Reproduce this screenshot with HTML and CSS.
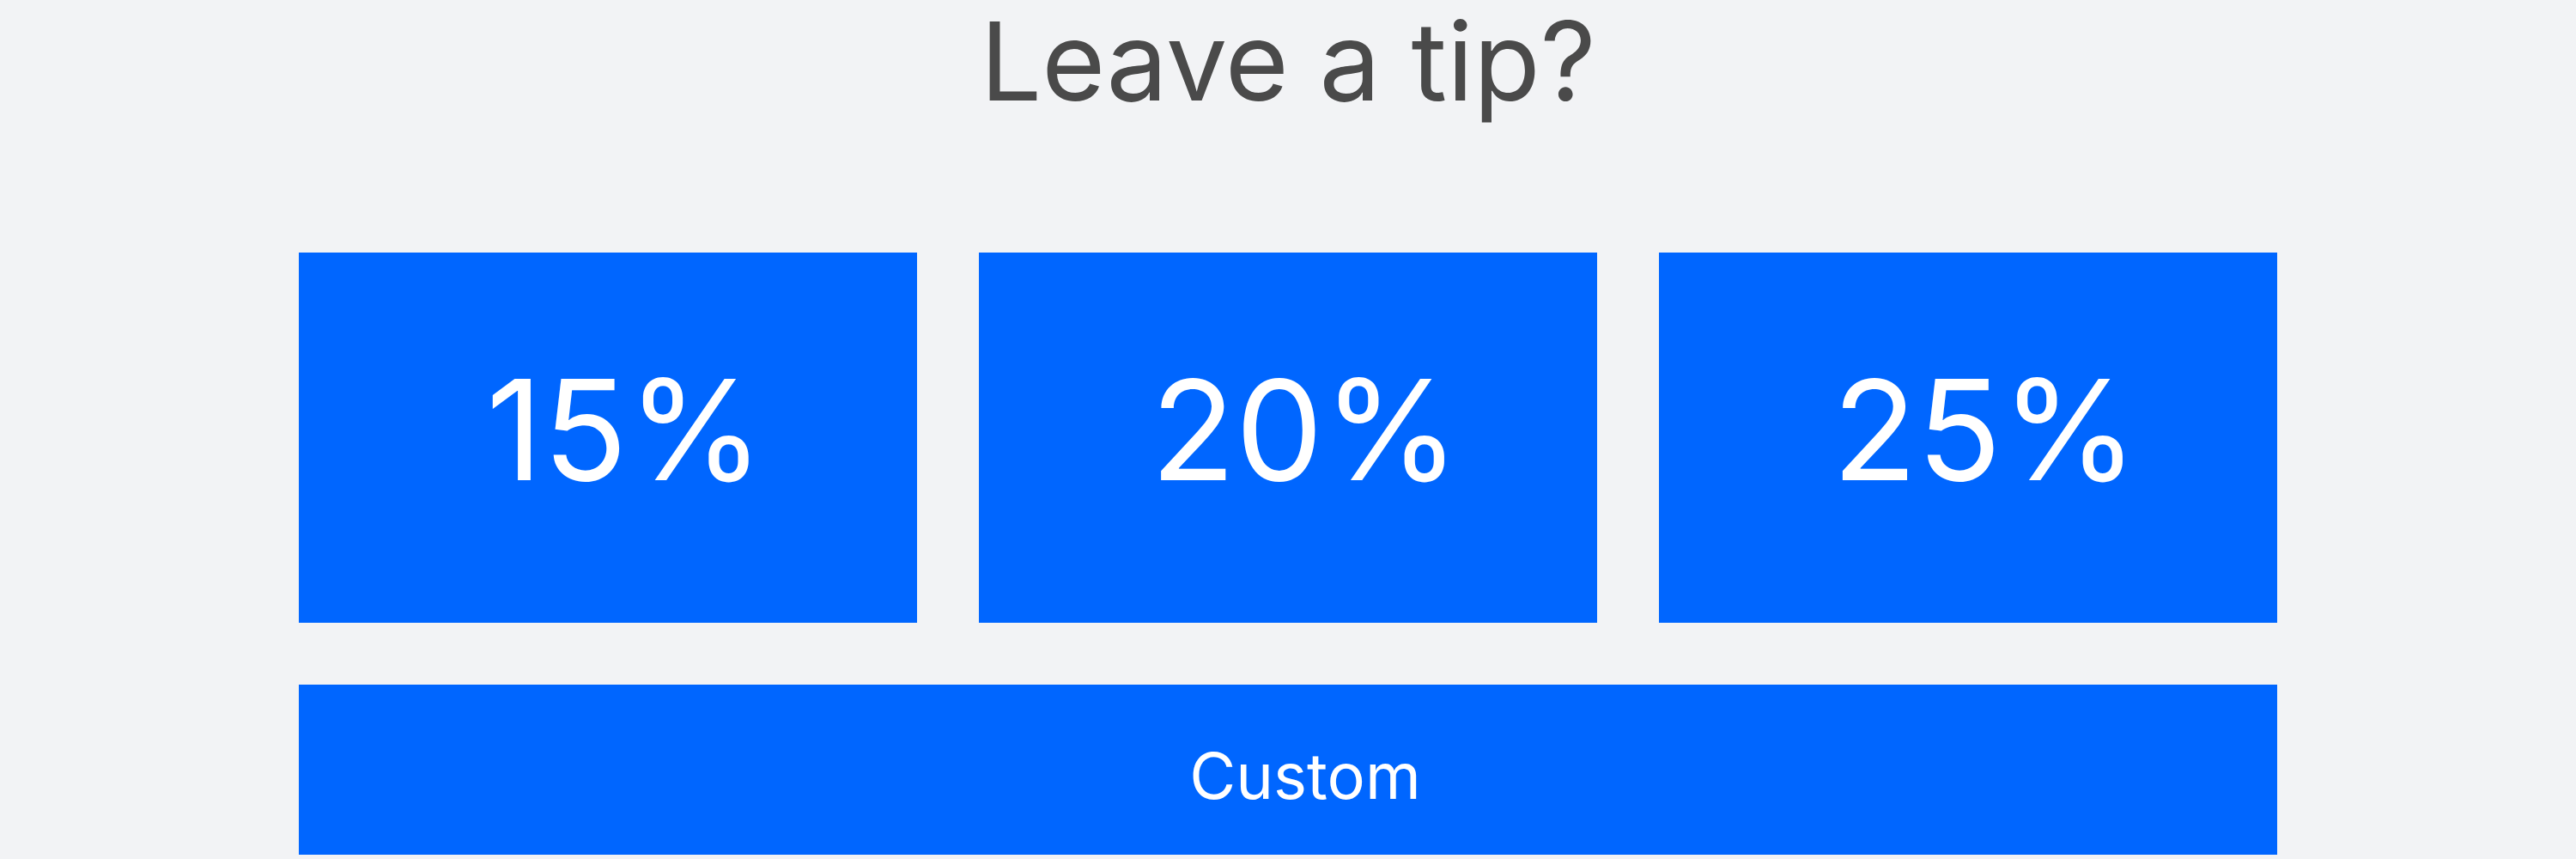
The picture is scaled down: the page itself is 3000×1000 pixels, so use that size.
FILE: index.html
```html
<!DOCTYPE html>
<html lang="en">
<head>
    <meta charset="UTF-8">
    <meta name="viewport" content="width=device-width, initial-scale=1.0">
    <title>Leave a tip</title>
    <link rel="stylesheet" href="styles.css">
</head>
<body>
<div class="tip">
    <h1 class="tip-title">Leave a tip?</h1>
    <div class="tip-grid">
        <a class="tip-btn">15%</a>
        <a class="tip-btn">20%</a>
        <a class="tip-btn">25%</a>
        <a class="tip-btn tip-custom">Custom</a>
    </div>
</div>
</body>
</html>
```

FILE: styles.css
```css
html,
body {
    margin: 0;
    background: #f2f3f5;
}
body {
    font-family: Inter, Lato, sans-serif;
}
.tip {
    width: 2304px;
    margin: 0 auto;
}
.tip-title {
    margin: 0;
    height: 294px;
    font-size: 127px;
    font-weight: 400;
    line-height: 142px;
    color: #4a4a4a;
    text-align: center;
}
.tip-grid {
    display: grid;
    grid-template-columns: repeat(3, 1fr);
    gap: 72px;
}
.tip-btn {
    display: flex;
    align-items: center;
    justify-content: center;
    height: 431px;
    padding-left: 40px;
    padding-bottom: 20px;
    box-sizing: border-box;
    background: #0066ff;
    color: #fff;
    font-size: 162px;
    font-weight: 400;
}
.tip-custom {
    grid-column: 1 / -1;
    height: 198px;
    padding-bottom: 0;
    padding-left: 40px;
    padding-top: 14px;
    font-size: 74px;
}
```
